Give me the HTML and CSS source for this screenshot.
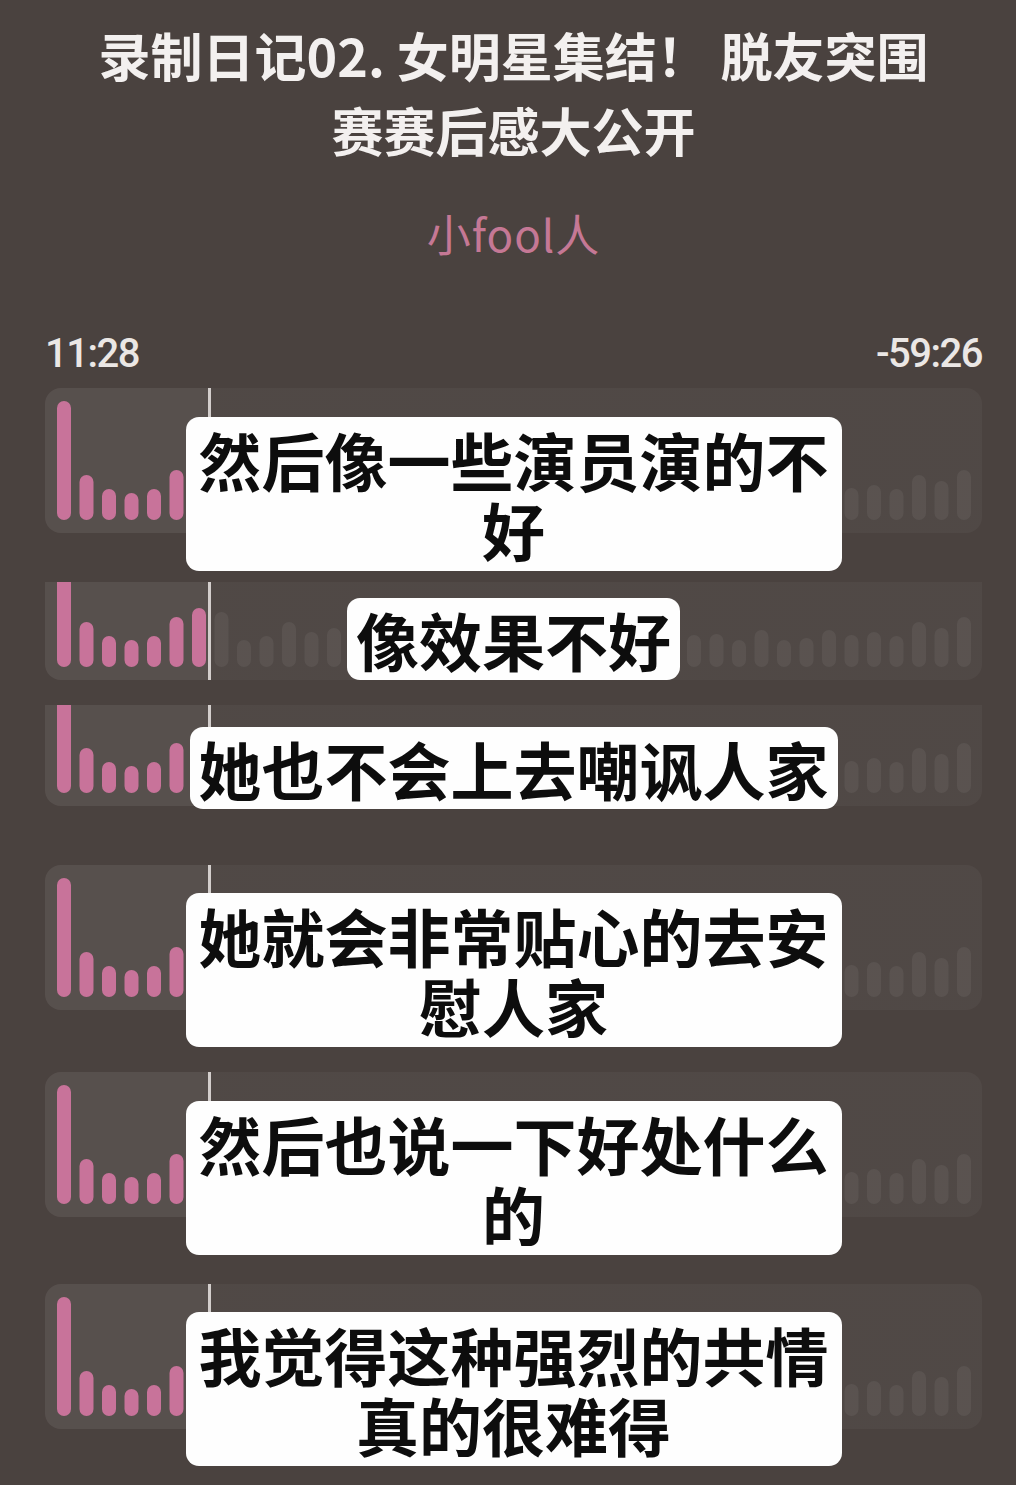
FILE: index.html
```html
<!DOCTYPE html>
<html lang="zh-CN">
<head>
<meta charset="utf-8">
<title>录制日记02</title>
<link rel="stylesheet" href="styles.css">
</head>
<body>
<svg class="defs" aria-hidden="true">
  <symbol id="wave" viewBox="0 0 937 145">
    <g fill="#c8739a">
      <rect x="12" y="13" width="14" height="119" rx="7"/>
      <rect x="34.5" y="87" width="14" height="45" rx="7"/>
      <rect x="57" y="101" width="14" height="31" rx="7"/>
      <rect x="79.5" y="105" width="14" height="27" rx="7"/>
      <rect x="102" y="101" width="14" height="31" rx="7"/>
      <rect x="124.5" y="82" width="14" height="50" rx="7"/>
      <rect x="147" y="73" width="14" height="59" rx="7"/>
    </g>
    <g fill="#ffffff" fill-opacity="0.06">
      <rect x="169.5" y="77" width="14" height="55" rx="7"/>
      <rect x="192" y="105" width="14" height="27" rx="7"/>
      <rect x="214.5" y="101" width="14" height="31" rx="7"/>
      <rect x="237" y="87" width="14" height="45" rx="7"/>
      <rect x="259.5" y="97" width="14" height="35" rx="7"/>
      <rect x="282" y="93" width="14" height="39" rx="7"/>
      <rect x="304.5" y="99" width="14" height="33" rx="7"/>
      <rect x="327" y="96" width="14" height="36" rx="7"/>
      <rect x="349.5" y="102" width="14" height="30" rx="7"/>
      <rect x="372" y="94" width="14" height="38" rx="7"/>
      <rect x="394.5" y="98" width="14" height="34" rx="7"/>
      <rect x="417" y="103" width="14" height="29" rx="7"/>
      <rect x="439.5" y="96" width="14" height="36" rx="7"/>
      <rect x="462" y="92" width="14" height="40" rx="7"/>
      <rect x="484.5" y="100" width="14" height="32" rx="7"/>
      <rect x="507" y="97" width="14" height="35" rx="7"/>
      <rect x="529.5" y="102" width="14" height="30" rx="7"/>
      <rect x="552" y="95" width="14" height="37" rx="7"/>
      <rect x="574.5" y="99" width="14" height="33" rx="7"/>
      <rect x="597" y="101" width="14" height="31" rx="7"/>
      <rect x="619.5" y="96" width="14" height="36" rx="7"/>
      <rect x="642" y="100" width="14" height="32" rx="7"/>
      <rect x="664.5" y="99" width="14" height="33" rx="7"/>
      <rect x="687" y="105" width="14" height="27" rx="7"/>
      <rect x="709.5" y="95" width="14" height="37" rx="7"/>
      <rect x="732" y="105" width="14" height="27" rx="7"/>
      <rect x="754.5" y="103" width="14" height="29" rx="7"/>
      <rect x="777" y="95" width="14" height="37" rx="7"/>
      <rect x="799.5" y="100" width="14" height="32" rx="7"/>
      <rect x="822" y="97" width="14" height="35" rx="7"/>
      <rect x="844.5" y="101" width="14" height="31" rx="7"/>
      <rect x="867" y="87" width="14" height="45" rx="7"/>
      <rect x="889.5" y="93" width="14" height="39" rx="7"/>
      <rect x="912" y="82" width="14" height="50" rx="7"/>
    </g>
  </symbol>
</svg>

<main class="page">
  <header class="header">
    <h1 class="title">录制日记02. 女明星集结！ 脱友突围赛赛后感大公开</h1>
    <p class="author">小fool人</p>
    <div class="times">
      <span>11:28</span>
      <span>-59:26</span>
    </div>
  </header>

  <section class="strip strip-1">
    <div class="wave"><svg class="bars" viewBox="0 0 937 145"><use href="#wave"/></svg></div>
    <p class="caption cap-two">然后像一些演员演的不好</p>
  </section>

  <section class="strip strip-2">
    <div class="wave wave-crop47"><svg class="bars" viewBox="0 0 937 145"><use href="#wave"/></svg></div>
    <p class="caption cap-one cap-off16">像效果不好</p>
  </section>

  <section class="strip strip-3">
    <div class="wave wave-crop44"><svg class="bars" viewBox="0 0 937 145"><use href="#wave"/></svg></div>
    <p class="caption cap-one cap-off22">她也不会上去嘲讽人家</p>
  </section>

  <section class="strip strip-4">
    <div class="wave"><svg class="bars" viewBox="0 0 937 145"><use href="#wave"/></svg></div>
    <p class="caption cap-two cap-off28">她就会非常贴心的去安慰人家</p>
  </section>

  <section class="strip strip-5">
    <div class="wave"><svg class="bars" viewBox="0 0 937 145"><use href="#wave"/></svg></div>
    <p class="caption cap-two">然后也说一下好处什么的</p>
  </section>

  <section class="strip strip-6">
    <div class="wave"><svg class="bars" viewBox="0 0 937 145"><use href="#wave"/></svg></div>
    <p class="caption cap-two cap-off28">我觉得这种强烈的共情真的很难得</p>
  </section>
</main>
</body>
</html>
```

FILE: styles.css
```css
html, body {
  margin: 0;
  padding: 0;
  background: #4a423f;
}

body {
  width: 1016px;
  height: 1485px;
  overflow: hidden;
  font-family: "Noto Sans CJK SC", "Noto Sans", sans-serif;
}

.defs {
  display: block;
  width: 0;
  height: 0;
}

.page {
  padding: 0 34px 0 45px;
}

.header {
  padding-top: 17px;
  text-align: center;
}

.title {
  margin: 0 auto;
  max-width: 850px;
  font-size: 52px;
  line-height: 75px;
  font-weight: 700;
  color: #f3f0ef;
}

.author {
  margin: 41px 0 0;
  font-size: 44px;
  line-height: 50px;
  font-weight: 400;
  letter-spacing: 1px;
  color: #c57895;
}

.times {
  margin-top: 76px;
  display: flex;
  justify-content: space-between;
  font-family: "Roboto", "Noto Sans", sans-serif;
  font-size: 40px;
  line-height: 40px;
  font-weight: 500;
  letter-spacing: -1.5px;
  color: #ebe7e5;
}

.strip {
  display: grid;
}

.strip > * {
  grid-area: 1 / 1;
}

.strip-1 { margin-top: 14px; }
.strip-2 { margin-top: 11px; }
.strip-3 { margin-top: 25px; }
.strip-4 { margin-top: 56px; }
.strip-5 { margin-top: 25px; }
.strip-6 { margin-top: 29px; }

.wave {
  align-self: start;
  height: 145px;
  overflow: hidden;
  border-radius: 16px;
  background:
    linear-gradient(to right,
      rgba(255, 255, 255, 0.075) 0 163px,
      #d3cecc 163px 166px,
      rgba(255, 255, 255, 0.035) 166px);
}

.wave-crop47 {
  height: 98px;
  border-radius: 0 0 16px 16px;
}

.wave-crop47 .bars { margin-top: -47px; }

.wave-crop44 {
  height: 101px;
  border-radius: 0 0 16px 16px;
}

.wave-crop44 .bars { margin-top: -44px; }

.bars {
  display: block;
  width: 937px;
  height: 145px;
}

.caption {
  justify-self: center;
  align-self: start;
  margin: 29px 0 0;
  box-sizing: border-box;
  max-width: 656px;
  padding: 6px 9px;
  background: #fefefe;
  border-radius: 13px;
  color: #0d0d0d;
  font-size: 63px;
  line-height: 70px;
  font-weight: 700;
  text-align: center;
}

.cap-two { padding: 7px 9px; }
.cap-one { padding: 6px 9px; }
.cap-off16 { margin-top: 16px; }
.cap-off22 { margin-top: 22px; }
.cap-off28 { margin-top: 28px; }
```
